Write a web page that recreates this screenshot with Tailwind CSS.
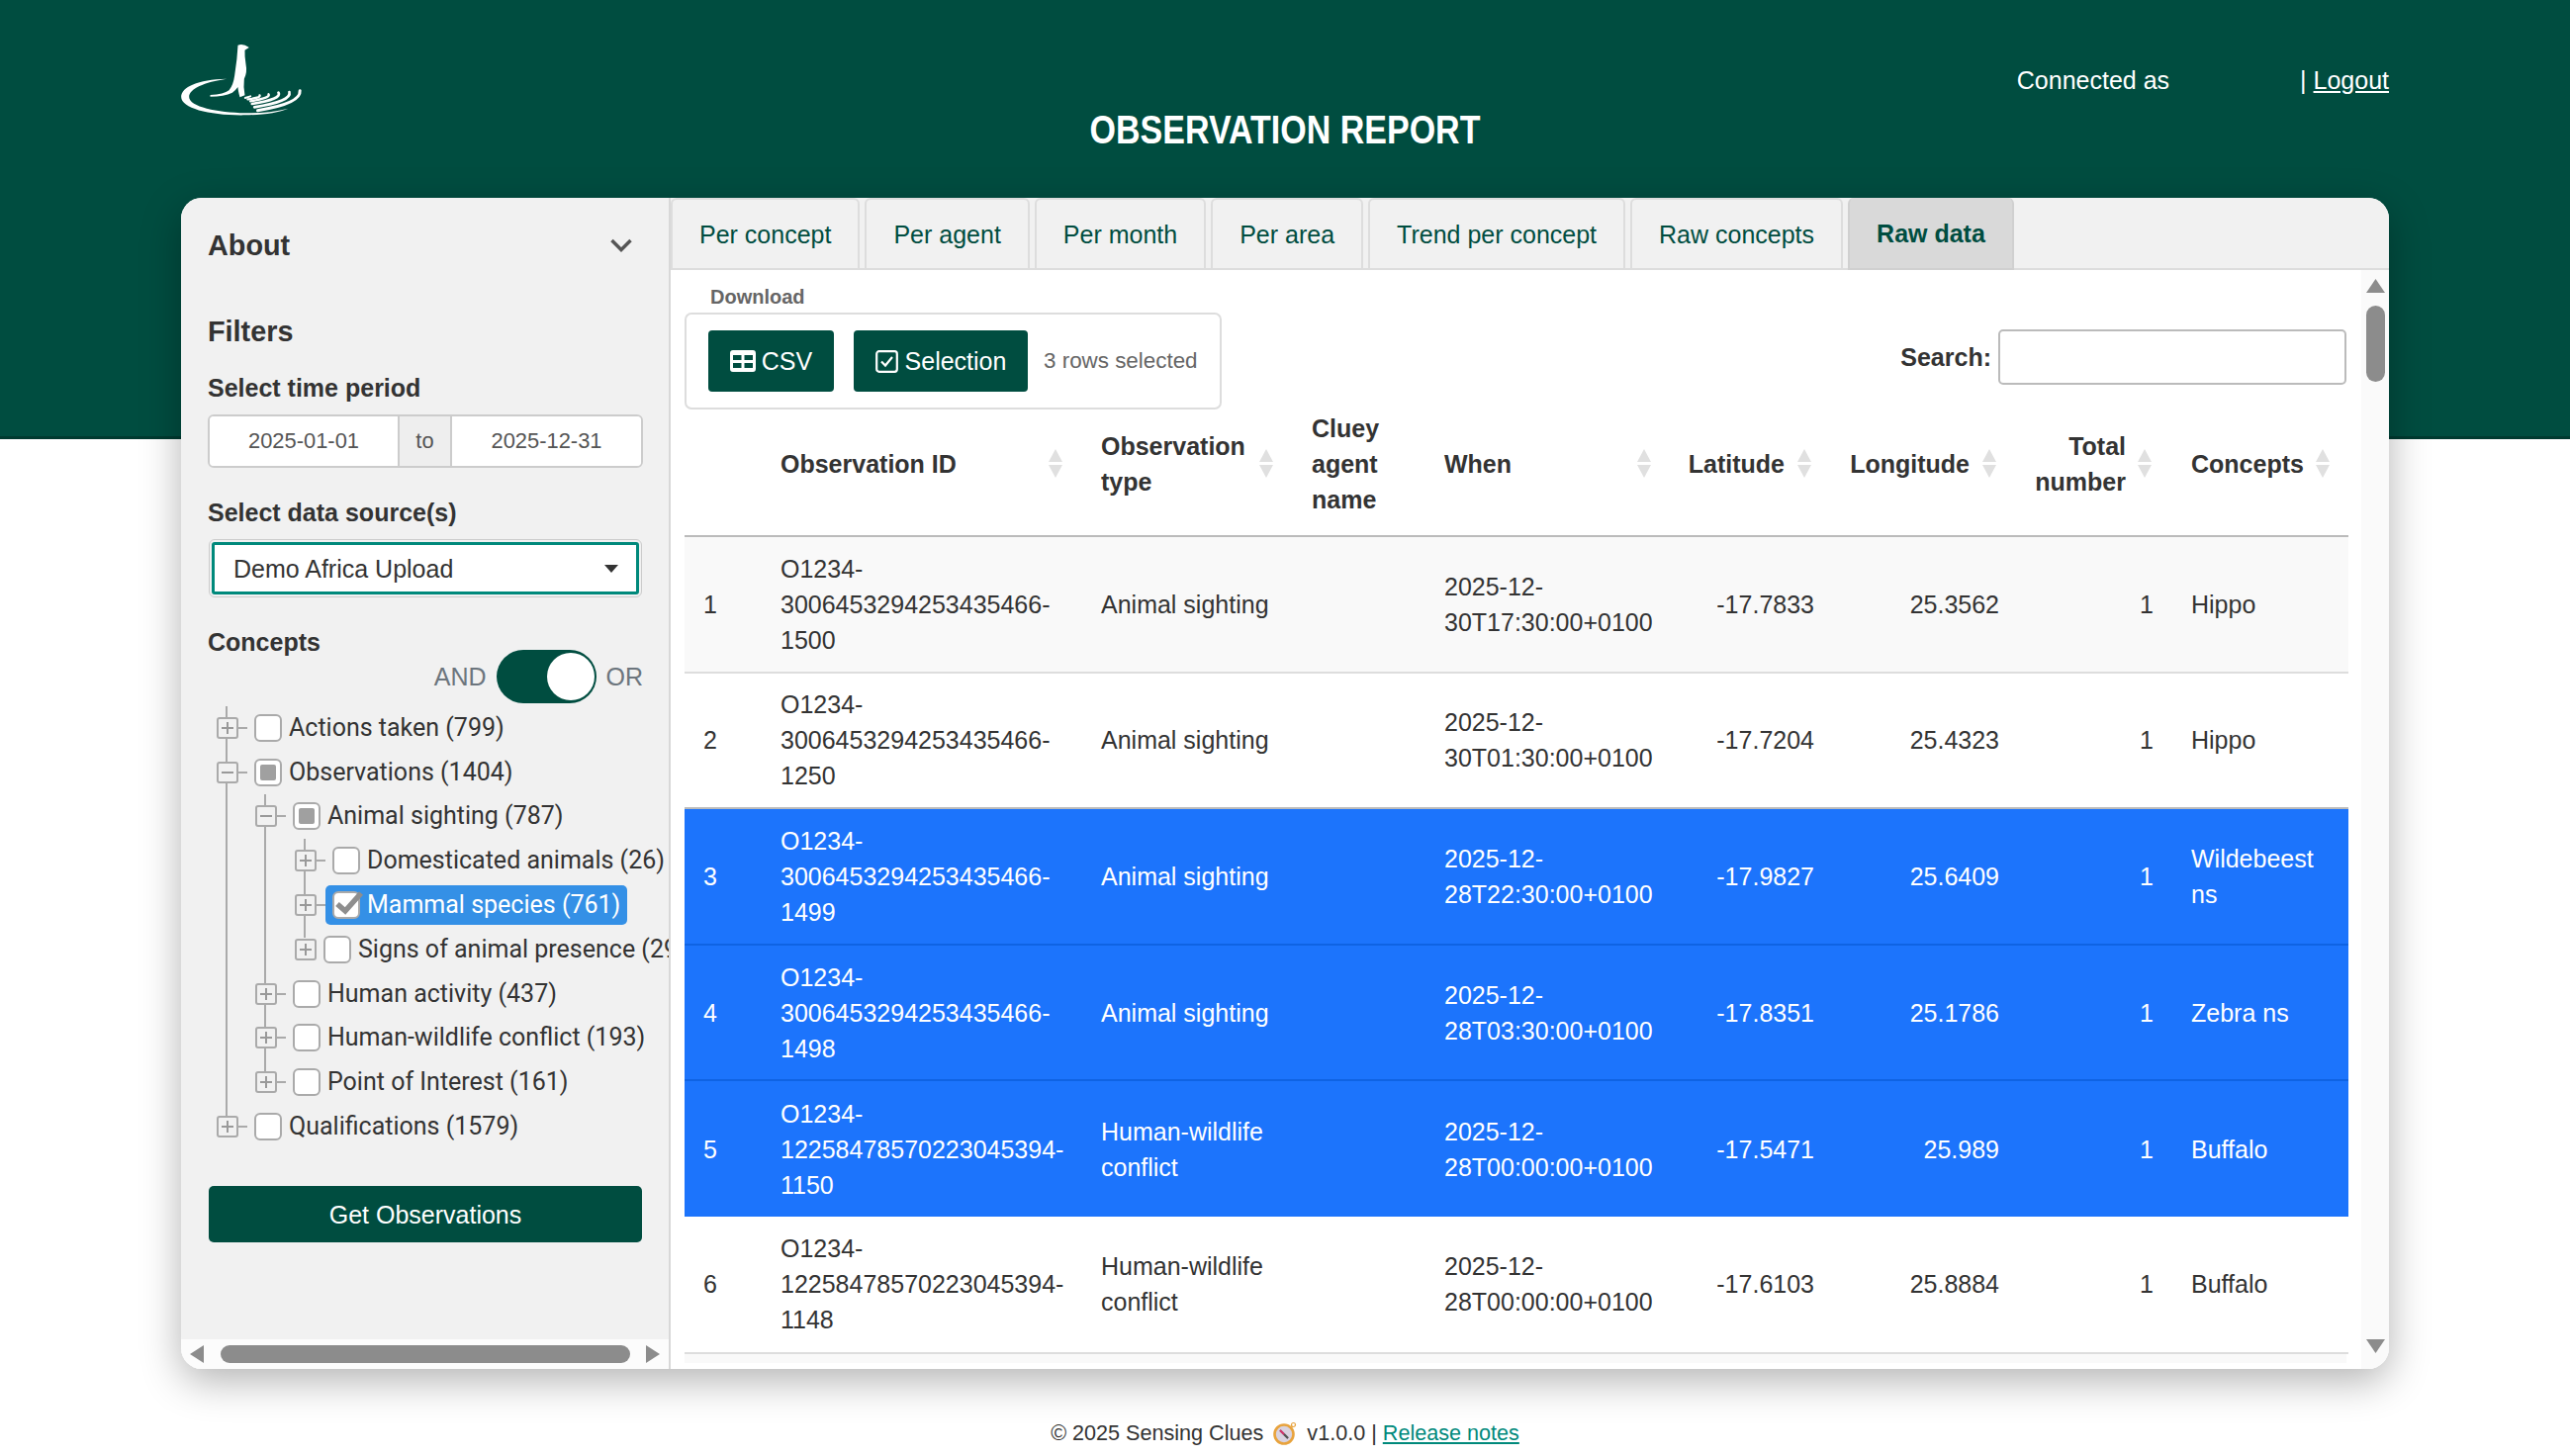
<!DOCTYPE html>
<html lang="en">
<head>
  <meta charset="UTF-8" />
  <meta name="viewport" content="width=device-width, initial-scale=1.0" />
  <title>Observation Report</title>
  <script src="https://cdn.jsdelivr.net/npm/@tailwindcss/browser@4"></script>
</head>
<body class="bg-white min-h-screen overflow-hidden font-['Liberation_Sans',Arial,sans-serif] text-[25px] leading-[36px] text-[#333]">
  <!-- header -->
  <header class="h-[444px] bg-[#004d40] border-b-[3px] border-[#003a30] px-[183px] grid grid-cols-3 text-white">
    <div class="pt-[43px]">
      <svg width="127" height="75" viewBox="40 40 380 225" fill="#fff">
        <path d="M212 48 Q228 42 246 55 L233 63 Q232 80 236 105 Q241 130 231 150 Q228 175 233 200 L218 206 Q212 185 212 175 Q205 185 195 192 Q170 204 128 204 L128 199 Q170 197 185 185 Q198 170 202 140 Q210 90 212 48Z" />
        <path d="M178 150 C90 152 40 175 40 205 C40 240 130 262 235 260 C290 259 335 253 365 240 C320 251 280 254 235 254 C150 252 64 235 64 205 C64 180 110 160 178 150Z" />
        <g fill="none" stroke="#fff" stroke-linecap="round">
          <path stroke-width="9" d="M400 186 Q404 225 272 246" />
          <path stroke-width="8" d="M368 190 Q376 218 262 236" />
          <path stroke-width="8" d="M335 192 Q346 212 255 226" />
          <path stroke-width="7" d="M305 197 Q312 208 250 218" />
          <path stroke-width="7" d="M278 200 Q280 208 242 212" />
          <path stroke-width="6" d="M250 203 L234 208" />
        </g>
      </svg>
    </div>
    <div class="pt-[107px] text-center">
      <h1 class="text-[40px] leading-[48px] font-bold whitespace-nowrap scale-x-[0.85]">OBSERVATION REPORT</h1>
    </div>
    <div class="pt-[63px] flex justify-end">
      <span class="mr-[132px]">Connected as</span>
      <span>| <a href="#" class="underline">Logout</a></span>
    </div>
  </header>

  <!-- card -->
  <main class="mx-[183px] -mt-[244px] h-[1184px] flex rounded-[21px] overflow-hidden bg-white shadow-[0_12px_40px_rgba(0,0,0,0.3)] relative">
    <!-- sidebar -->
    <aside class="w-[495px] shrink-0 bg-[#f1f1f1] border-r-2 border-[#d8d8d8] flex flex-col">
      <div class="flex-1 overflow-hidden px-[27px] pt-[30px]">
        <div class="w-[440px]">
          <div class="flex items-center justify-between">
            <h2 class="text-[28.8px] font-bold">About</h2>
            <svg class="mr-[11px]" width="22" height="14" viewBox="0 0 22 14" fill="none" stroke="#555" stroke-width="3.5"><path d="M1.5 2 L11 11.5 L20.5 2" /></svg>
          </div>
          <h2 class="mt-[51px] text-[28.8px] font-bold">Filters</h2>
          <p class="mt-[21px] font-bold">Select time period</p>
          <div class="mt-[9px] h-[54px] flex border-2 border-[#ccc] rounded-[6px] overflow-hidden text-[21.9px] text-[#555]">
            <div class="w-[190px] bg-white flex items-center justify-center">2025-01-01</div>
            <div class="w-[55px] bg-[#eee] border-x-2 border-[#ccc] flex items-center justify-center">to</div>
            <div class="flex-1 bg-white flex items-center justify-center">2025-12-31</div>
          </div>
          <p class="mt-[27px] font-bold">Select data source(s)</p>
          <div class="mt-[9px] ml-[1px] w-[438px] h-[59px] rounded-[6px] border border-[#ccc] p-[2px]">
            <div class="h-full border-[3px] border-[#00897b] rounded-[3px] bg-white flex items-center justify-between pl-[19px] pr-[18px]">
              <span>Demo Africa Upload</span>
              <svg width="14" height="8" viewBox="0 0 14 8" fill="#333"><path d="M0 0 H14 L7 8Z" /></svg>
            </div>
          </div>
          <p class="mt-[27px] font-bold">Concepts</p>
          <div class="-mt-[10px] h-[54px] flex items-center justify-end gap-[10px] text-[#6c757d]">
            <span>AND</span>
            <div class="w-[101px] h-[54px] rounded-full bg-[#004d40] flex items-center justify-end pr-[2px]">
              <div class="w-[48px] h-[48px] rounded-full bg-white"></div>
            </div>
            <span>OR</span>
          </div>

          <!-- concept tree -->
          <div class="relative mt-[2.5px] w-[480px] font-['Roboto',sans-serif] whitespace-nowrap">
            <div class="absolute left-[18px] top-0 w-[2px] h-[415px] bg-[#aaa]"></div>
            <div class="absolute left-[57px] top-[89px] w-[2px] h-[280px] bg-[#aaa]"></div>
            <div class="absolute left-[97px] top-[134px] w-[2px] h-[100px] bg-[#aaa]"></div>

            <div class="relative h-[44.8px] flex items-center pl-[9px]">
              <span class="w-[22px] h-[22px] shrink-0 border-2 border-[#aaa] rounded-[3px] bg-[#f1f1f1] flex items-center justify-center"><svg width="12" height="12" viewBox="0 0 12 12" stroke="#999" stroke-width="2"><path d="M0 6 H12 M6 0 V12" /></svg></span>
              <span class="w-[9px] h-[2px] bg-[#aaa]"></span>
              <span class="flex items-center h-[40px] px-[7px] gap-[7px]"><span class="w-[28px] h-[28px] border-[2.5px] border-[#aaa] rounded-[6px] bg-white"></span>Actions taken (799)</span>
            </div>
            <div class="relative h-[44.8px] flex items-center pl-[9px]">
              <span class="w-[22px] h-[22px] shrink-0 border-2 border-[#aaa] rounded-[3px] bg-[#f1f1f1] flex items-center justify-center"><svg width="12" height="12" viewBox="0 0 12 12" stroke="#999" stroke-width="2"><path d="M0 6 H12" /></svg></span>
              <span class="w-[9px] h-[2px] bg-[#aaa]"></span>
              <span class="flex items-center h-[40px] px-[7px] gap-[7px]"><span class="w-[28px] h-[28px] border-[2.5px] border-[#aaa] rounded-[6px] bg-white flex items-center justify-center"><span class="w-[16px] h-[16px] rounded-[2px] bg-[#a0a0a0]"></span></span>Observations (1404)</span>
            </div>
            <div class="relative h-[44.8px] flex items-center pl-[48px]">
              <span class="w-[22px] h-[22px] shrink-0 border-2 border-[#aaa] rounded-[3px] bg-[#f1f1f1] flex items-center justify-center"><svg width="12" height="12" viewBox="0 0 12 12" stroke="#999" stroke-width="2"><path d="M0 6 H12" /></svg></span>
              <span class="w-[9px] h-[2px] bg-[#aaa]"></span>
              <span class="flex items-center h-[40px] px-[7px] gap-[7px]"><span class="w-[28px] h-[28px] border-[2.5px] border-[#aaa] rounded-[6px] bg-white flex items-center justify-center"><span class="w-[16px] h-[16px] rounded-[2px] bg-[#a0a0a0]"></span></span>Animal sighting (787)</span>
            </div>
            <div class="relative h-[44.8px] flex items-center pl-[88px]">
              <span class="w-[22px] h-[22px] shrink-0 border-2 border-[#aaa] rounded-[3px] bg-[#f1f1f1] flex items-center justify-center"><svg width="12" height="12" viewBox="0 0 12 12" stroke="#999" stroke-width="2"><path d="M0 6 H12 M6 0 V12" /></svg></span>
              <span class="w-[9px] h-[2px] bg-[#aaa]"></span>
              <span class="flex items-center h-[40px] px-[7px] gap-[7px]"><span class="w-[28px] h-[28px] border-[2.5px] border-[#aaa] rounded-[6px] bg-white"></span>Domesticated animals (26)</span>
            </div>
            <div class="relative h-[44.8px] flex items-center pl-[88px]">
              <span class="w-[22px] h-[22px] shrink-0 border-2 border-[#aaa] rounded-[3px] bg-[#f1f1f1] flex items-center justify-center"><svg width="12" height="12" viewBox="0 0 12 12" stroke="#999" stroke-width="2"><path d="M0 6 H12 M6 0 V12" /></svg></span>
              <span class="w-[9px] h-[2px] bg-[#aaa]"></span>
              <span class="flex items-center h-[40px] px-[7px] gap-[7px] rounded-[5px] bg-[#3490e6] text-white"><span class="relative w-[28px] h-[28px] border-[2.5px] border-[#aaa] rounded-[6px] bg-white"><svg class="absolute -top-[3px] -left-[1px]" width="32" height="26" viewBox="0 0 32 26" fill="none" stroke="#8e8e8e" stroke-width="5.5"><path d="M4 14 L12 21 L28 3" /></svg></span>Mammal species (761)</span>
            </div>
            <div class="relative h-[44.8px] flex items-center pl-[88px]">
              <span class="w-[22px] h-[22px] shrink-0 border-2 border-[#aaa] rounded-[3px] bg-[#f1f1f1] flex items-center justify-center"><svg width="12" height="12" viewBox="0 0 12 12" stroke="#999" stroke-width="2"><path d="M0 6 H12 M6 0 V12" /></svg></span>
              <span class="w-[9px] h-[2px] bg-[#aaa]"></span>
              <span class="flex items-center h-[40px] px-[7px] gap-[7px]"><span class="w-[28px] h-[28px] border-[2.5px] border-[#aaa] rounded-[6px] bg-white"></span>Signs of animal presence (29)</span>
            </div>
            <div class="relative h-[44.8px] flex items-center pl-[48px]">
              <span class="w-[22px] h-[22px] shrink-0 border-2 border-[#aaa] rounded-[3px] bg-[#f1f1f1] flex items-center justify-center"><svg width="12" height="12" viewBox="0 0 12 12" stroke="#999" stroke-width="2"><path d="M0 6 H12 M6 0 V12" /></svg></span>
              <span class="w-[9px] h-[2px] bg-[#aaa]"></span>
              <span class="flex items-center h-[40px] px-[7px] gap-[7px]"><span class="w-[28px] h-[28px] border-[2.5px] border-[#aaa] rounded-[6px] bg-white"></span>Human activity (437)</span>
            </div>
            <div class="relative h-[44.8px] flex items-center pl-[48px]">
              <span class="w-[22px] h-[22px] shrink-0 border-2 border-[#aaa] rounded-[3px] bg-[#f1f1f1] flex items-center justify-center"><svg width="12" height="12" viewBox="0 0 12 12" stroke="#999" stroke-width="2"><path d="M0 6 H12 M6 0 V12" /></svg></span>
              <span class="w-[9px] h-[2px] bg-[#aaa]"></span>
              <span class="flex items-center h-[40px] px-[7px] gap-[7px]"><span class="w-[28px] h-[28px] border-[2.5px] border-[#aaa] rounded-[6px] bg-white"></span>Human-wildlife conflict (193)</span>
            </div>
            <div class="relative h-[44.8px] flex items-center pl-[48px]">
              <span class="w-[22px] h-[22px] shrink-0 border-2 border-[#aaa] rounded-[3px] bg-[#f1f1f1] flex items-center justify-center"><svg width="12" height="12" viewBox="0 0 12 12" stroke="#999" stroke-width="2"><path d="M0 6 H12 M6 0 V12" /></svg></span>
              <span class="w-[9px] h-[2px] bg-[#aaa]"></span>
              <span class="flex items-center h-[40px] px-[7px] gap-[7px]"><span class="w-[28px] h-[28px] border-[2.5px] border-[#aaa] rounded-[6px] bg-white"></span>Point of Interest (161)</span>
            </div>
            <div class="relative h-[44.8px] flex items-center pl-[9px]">
              <span class="w-[22px] h-[22px] shrink-0 border-2 border-[#aaa] rounded-[3px] bg-[#f1f1f1] flex items-center justify-center"><svg width="12" height="12" viewBox="0 0 12 12" stroke="#999" stroke-width="2"><path d="M0 6 H12 M6 0 V12" /></svg></span>
              <span class="w-[9px] h-[2px] bg-[#aaa]"></span>
              <span class="flex items-center h-[40px] px-[7px] gap-[7px]"><span class="w-[28px] h-[28px] border-[2.5px] border-[#aaa] rounded-[6px] bg-white"></span>Qualifications (1579)</span>
            </div>
          </div>

          <button class="mt-[38px] ml-[1px] w-[438px] h-[57px] rounded-[5px] bg-[#004d40] text-white">Get Observations</button>
        </div>
      </div>
      <div class="h-[30px] shrink-0 bg-[#fcfcfc] flex items-center pl-[9px] pr-[9px] justify-between">
        <svg width="14" height="18" viewBox="0 0 14 18" fill="#8c8c8c"><path d="M14 0 V18 L0 9Z" /></svg>
        <div class="w-[414px] h-[18px] rounded-full bg-[#8c8c8c]"></div>
        <svg width="14" height="18" viewBox="0 0 14 18" fill="#8c8c8c"><path d="M0 0 V18 L14 9Z" /></svg>
      </div>
    </aside>

    <!-- main panel -->
    <section class="flex-1 min-w-0 flex flex-col">
      <nav class="h-[73px] shrink-0 bg-[#f1f1f1] border-b-2 border-[#ddd] flex gap-[5px] text-[#004d40]">
        <a class="h-[73px] px-[27px] flex items-center border-x-2 border-t-2 border-b-2 border-[#ddd] rounded-t-[6px]">Per concept</a>
        <a class="h-[73px] px-[27px] flex items-center border-x-2 border-t-2 border-b-2 border-[#ddd] rounded-t-[6px]">Per agent</a>
        <a class="h-[73px] px-[27px] flex items-center border-x-2 border-t-2 border-b-2 border-[#ddd] rounded-t-[6px]">Per month</a>
        <a class="h-[73px] px-[27px] flex items-center border-x-2 border-t-2 border-b-2 border-[#ddd] rounded-t-[6px]">Per area</a>
        <a class="h-[73px] px-[27px] flex items-center border-x-2 border-t-2 border-b-2 border-[#ddd] rounded-t-[6px]">Trend per concept</a>
        <a class="h-[73px] px-[27px] flex items-center border-x-2 border-t-2 border-b-2 border-[#ddd] rounded-t-[6px]">Raw concepts</a>
        <a class="h-[73px] px-[27px] flex items-center border-x-2 border-b-2 border-[#d0d0d0] rounded-t-[6px] bg-[#d9d9d9] font-bold">Raw data</a>
      </nav>

      <div class="flex-1 min-h-0 flex">
        <div class="flex-1 min-w-0 overflow-hidden pl-[14px] pr-[15px] pt-[13px]">
          <p class="ml-[26px] text-[20px] leading-[28px] font-bold text-[#666]">Download</p>
          <div class="mt-[2px] flex items-start justify-between">
            <div class="w-[543px] h-[98px] border-2 border-[#ddd] rounded-[7px] pl-[22px] flex items-center">
              <button class="w-[127px] h-[62px] rounded-[4px] bg-[#004d40] text-white flex items-center justify-center gap-[6px]">
                <svg width="26" height="22" viewBox="0 0 26 22"><path fill="#fff" fill-rule="evenodd" d="M3 0 H23 A3 3 0 0 1 26 3 V19 A3 3 0 0 1 23 22 H3 A3 3 0 0 1 0 19 V3 A3 3 0 0 1 3 0Z M3 5 V10 H11.5 V5Z M14.5 5 V10 H23 V5Z M3 13 V18 H11.5 V13Z M14.5 13 V18 H23 V13Z" /></svg>
                CSV
              </button>
              <button class="ml-[20px] w-[176px] h-[62px] rounded-[4px] bg-[#004d40] text-white flex items-center justify-center gap-[7px]">
                <svg width="23" height="23" viewBox="0 0 23 23" fill="none" stroke="#fff" stroke-width="2.2"><rect x="1.2" y="1.2" width="20.6" height="20.6" rx="2.5" /><path d="M6 11.5 L10 15.5 L17 7" /></svg>
                Selection
              </button>
              <span class="ml-[16px] text-[22.4px] text-[#666]">3 rows selected</span>
            </div>
            <div class="mt-[17px] flex items-center gap-[7px]">
              <span class="font-bold">Search:</span>
              <div class="w-[352px] h-[56px] border-2 border-[#bbb] rounded-[5px] bg-white"></div>
            </div>
          </div>

          <table class="w-[1682px] table-fixed border-collapse">
            <colgroup>
              <col class="w-[78px]" /><col class="w-[324px]" /><col class="w-[213px]" /><col class="w-[134px]" /><col class="w-[248px]" /><col class="w-[164px]" /><col class="w-[187px]" /><col class="w-[156px]" /><col class="w-[178px]" />
            </colgroup>
            <thead>
              <tr class="h-[128px] border-b-2 border-[#bbb]">
                <th class="p-0"></th>
                <th class="pb-[18px] font-bold text-left"><div class="flex items-center justify-between pl-[19px] pr-[20px]"><span>Observation ID</span><svg width="14" height="29" viewBox="0 0 14 29" fill="#e0e0e0"><path d="M7 0 L14 13 H0Z M0 16 H14 L7 29Z" /></svg></div></th>
                <th class="pb-[18px] font-bold text-left"><div class="flex items-center justify-between pl-[19px] pr-[20px]"><span>Observation<br />type</span><svg width="14" height="29" viewBox="0 0 14 29" fill="#e0e0e0"><path d="M7 0 L14 13 H0Z M0 16 H14 L7 29Z" /></svg></div></th>
                <th class="pb-[18px] font-bold text-left"><div class="pl-[19px]">Cluey<br />agent<br />name</div></th>
                <th class="pb-[18px] font-bold text-left"><div class="flex items-center justify-between pl-[19px] pr-[20px]"><span>When</span><svg width="14" height="29" viewBox="0 0 14 29" fill="#e0e0e0"><path d="M7 0 L14 13 H0Z M0 16 H14 L7 29Z" /></svg></div></th>
                <th class="pb-[18px] font-bold text-right"><div class="flex items-center justify-end gap-[13px] pr-[22px]"><span>Latitude</span><svg width="14" height="29" viewBox="0 0 14 29" fill="#e0e0e0"><path d="M7 0 L14 13 H0Z M0 16 H14 L7 29Z" /></svg></div></th>
                <th class="pb-[18px] font-bold text-right"><div class="flex items-center justify-end gap-[13px] pr-[22px]"><span>Longitude</span><svg width="14" height="29" viewBox="0 0 14 29" fill="#e0e0e0"><path d="M7 0 L14 13 H0Z M0 16 H14 L7 29Z" /></svg></div></th>
                <th class="pb-[18px] font-bold text-right"><div class="flex items-center justify-end gap-[12px] pr-[21px]"><span>Total<br />number</span><svg width="14" height="29" viewBox="0 0 14 29" fill="#e0e0e0"><path d="M7 0 L14 13 H0Z M0 16 H14 L7 29Z" /></svg></div></th>
                <th class="pb-[18px] font-bold text-left"><div class="flex items-center justify-between pl-[19px] pr-[19px]"><span>Concepts</span><svg width="14" height="29" viewBox="0 0 14 29" fill="#e0e0e0"><path d="M7 0 L14 13 H0Z M0 16 H14 L7 29Z" /></svg></div></th>
              </tr>
            </thead>
            <tbody>
              <tr class="h-[137.6px] bg-[#f9f9f9] border-b-2 border-[#ddd]">
                <td class="pl-[19px]">1</td>
                <td class="pl-[19px] whitespace-nowrap">O1234-<br />300645329425343​5466-<br />1500</td>
                <td class="pl-[19px]">Animal sighting</td>
                <td></td>
                <td class="pl-[19px] whitespace-nowrap">2025-12-<br />30T17:30:00+0100</td>
                <td class="pr-[19px] text-right">-17.7833</td>
                <td class="pr-[19px] text-right">25.3562</td>
                <td class="pr-[19px] text-right">1</td>
                <td class="pl-[19px]">Hippo</td>
              </tr>
              <tr class="h-[137.6px] bg-white border-b-2 border-[#bbb]">
                <td class="pl-[19px]">2</td>
                <td class="pl-[19px] whitespace-nowrap">O1234-<br />300645329425343​5466-<br />1250</td>
                <td class="pl-[19px]">Animal sighting</td>
                <td></td>
                <td class="pl-[19px] whitespace-nowrap">2025-12-<br />30T01:30:00+0100</td>
                <td class="pr-[19px] text-right">-17.7204</td>
                <td class="pr-[19px] text-right">25.4323</td>
                <td class="pr-[19px] text-right">1</td>
                <td class="pl-[19px]">Hippo</td>
              </tr>
              <tr class="h-[137.6px] bg-[#1c74fc] text-white border-b-2 border-[#0f63e3]">
                <td class="pl-[19px]">3</td>
                <td class="pl-[19px] whitespace-nowrap">O1234-<br />300645329425343​5466-<br />1499</td>
                <td class="pl-[19px]">Animal sighting</td>
                <td></td>
                <td class="pl-[19px] whitespace-nowrap">2025-12-<br />28T22:30:00+0100</td>
                <td class="pr-[19px] text-right">-17.9827</td>
                <td class="pr-[19px] text-right">25.6409</td>
                <td class="pr-[19px] text-right">1</td>
                <td class="pl-[19px]">Wildebeest<br />ns</td>
              </tr>
              <tr class="h-[137.6px] bg-[#1c74fc] text-white border-b-2 border-[#0f63e3]">
                <td class="pl-[19px]">4</td>
                <td class="pl-[19px] whitespace-nowrap">O1234-<br />300645329425343​5466-<br />1498</td>
                <td class="pl-[19px]">Animal sighting</td>
                <td></td>
                <td class="pl-[19px] whitespace-nowrap">2025-12-<br />28T03:30:00+0100</td>
                <td class="pr-[19px] text-right">-17.8351</td>
                <td class="pr-[19px] text-right">25.1786</td>
                <td class="pr-[19px] text-right">1</td>
                <td class="pl-[19px]">Zebra ns</td>
              </tr>
              <tr class="h-[137.6px] bg-[#1c74fc] text-white">
                <td class="pl-[19px]">5</td>
                <td class="pl-[19px] whitespace-nowrap">O1234-<br />12258478570223045394-<br />1150</td>
                <td class="pl-[19px]">Human-wildlife<br />conflict</td>
                <td></td>
                <td class="pl-[19px] whitespace-nowrap">2025-12-<br />28T00:00:00+0100</td>
                <td class="pr-[19px] text-right">-17.5471</td>
                <td class="pr-[19px] text-right">25.989</td>
                <td class="pr-[19px] text-right">1</td>
                <td class="pl-[19px]">Buffalo</td>
              </tr>
              <tr class="h-[137.6px] bg-white border-b-2 border-[#ddd]">
                <td class="pl-[19px]">6</td>
                <td class="pl-[19px] whitespace-nowrap">O1234-<br />12258478570223045394-<br />1148</td>
                <td class="pl-[19px]">Human-wildlife<br />conflict</td>
                <td></td>
                <td class="pl-[19px] whitespace-nowrap">2025-12-<br />28T00:00:00+0100</td>
                <td class="pr-[19px] text-right">-17.6103</td>
                <td class="pr-[19px] text-right">25.8884</td>
                <td class="pr-[19px] text-right">1</td>
                <td class="pl-[19px]">Buffalo</td>
              </tr>
            </tbody>
          </table>
          <div class="h-[9px] bg-[#f9f9f9]"></div>
        </div>

        <!-- vertical scrollbar -->
        <div class="w-[28px] shrink-0 bg-[#fafafa] flex flex-col items-center pt-[9px] pb-[16px] pr-[4px] pl-[5px]">
          <svg width="19" height="14" viewBox="0 0 19 14" fill="#8c8c8c"><path d="M9.5 0 L19 14 H0Z" /></svg>
          <div class="mt-[13px] w-[19px] h-[77px] rounded-full bg-[#8c8c8c]"></div>
          <svg class="mt-auto" width="19" height="14" viewBox="0 0 19 14" fill="#8c8c8c"><path d="M0 0 H19 L9.5 14Z" /></svg>
        </div>
      </div>
    </section>
  </main>

  <footer class="mt-[50px] flex items-center justify-center text-[21.6px] leading-[30px]">
    <span>© 2025 Sensing Clues</span>
    <svg class="mx-[10px]" width="24" height="24" viewBox="0 0 24 24">
      <circle cx="11" cy="13" r="9.5" fill="#d9d3e0" stroke="#e8a33d" stroke-width="2.6" />
      <circle cx="20.5" cy="3.5" r="2" fill="none" stroke="#e8a33d" stroke-width="1.2" />
      <path d="M7 9 L15 17" stroke="#666" stroke-width="2" />
      <path d="M11 13 L15 17" stroke="#555" stroke-width="2" />
      <path d="M11 13 L7 9" stroke="#d6336c" stroke-width="2" />
    </svg>
    <span>v1.0.0 |&nbsp;</span>
    <a href="#" class="text-[#00897b] underline">Release notes</a>
  </footer>
</body>
</html>
